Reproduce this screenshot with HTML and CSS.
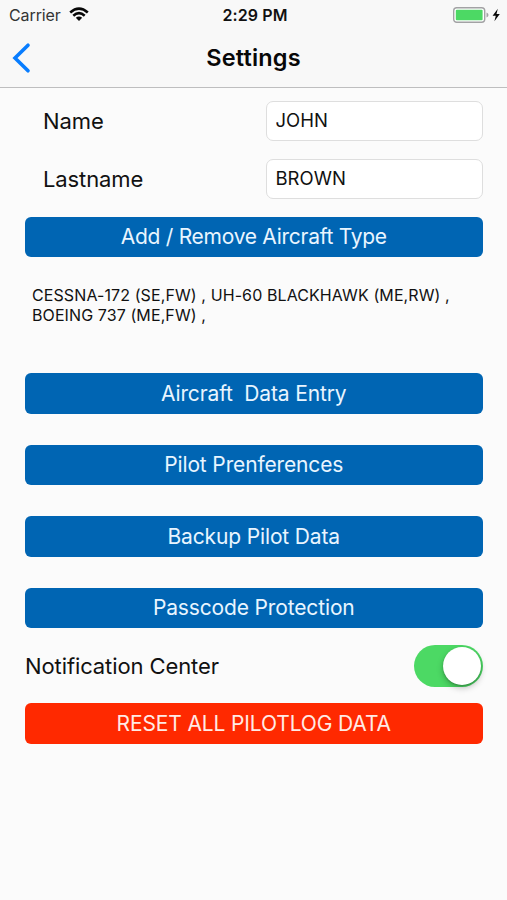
FILE: index.html
```html
<!DOCTYPE html>
<html lang="en">
<head>
<meta charset="utf-8">
<title>Settings</title>
<link rel="stylesheet" href="styles.css">
</head>
<body>
<header class="top">
  <div class="status">
    <div class="status-left"><span class="carrier">Carrier</span>
      <svg class="wifi" width="20" height="15" viewBox="0 0 20 15" fill="none" stroke="#080808" stroke-width="2.6"><path d="M1.2 5.4Q10-2.3 18.8 5.4"/><path d="M4.3 8.7Q10 3.7 15.7 8.7"/><path d="M6.8 10.8Q10 8 13.2 10.8L10 14Z" fill="#080808" stroke="none"/></svg>
    </div>
    <span class="time">2:29 PM</span>
    <div class="status-right">
      <svg width="48" height="18" viewBox="0 0 48 18"><rect x=".7" y="1.7" width="31" height="14.6" rx="3" fill="#fff" stroke="#a2a2a4" stroke-width="1.4"/><rect x="2.8" y="3.8" width="26.8" height="10.4" rx="1" fill="#4cd964"/><path d="M33.5 6.6Q35.5 7.3 35.5 9T33.5 11.4Z" fill="#a2a2a4"/><path d="M44.8 2.8 39.6 9.8H42.8L41.4 15.2 46.8 8H43.5Z" fill="#080808"/></svg>
    </div>
  </div>
  <div class="nav">
    <svg class="back" width="20" height="32" viewBox="0 0 20 32" fill="none" stroke="#087dff" stroke-width="3.6"><path d="M17 3.2 4 16 17 28.8" stroke-linecap="round"/></svg>
    <h1 class="title">Settings</h1>
  </div>
</header>
<main class="content">
  <label class="field"><span class="label name">Name</span><input class="input" type="text" value="JOHN"></label>
  <label class="field"><span class="label lastname">Lastname</span><input class="input" type="text" value="BROWN"></label>
  <button class="button add">Add / Remove Aircraft Type</button>
  <p class="types">CESSNA-172 (SE,FW) , UH-60 BLACKHAWK (ME,RW) ,<br>BOEING 737 (ME,FW) ,</p>
  <div class="actions">
    <button class="button">Aircraft&nbsp; Data Entry</button>
    <button class="button">Pilot Prenferences</button>
    <button class="button">Backup Pilot Data</button>
    <button class="button">Passcode Protection</button>
  </div>
  <div class="notify"><span class="label center">Notification Center</span><span class="switch"><span class="knob"></span></span></div>
  <button class="button reset">RESET ALL PILOTLOG DATA</button>
</main>
</body>
</html>
```
FILE: styles.css
```css
* { box-sizing: border-box; }
body {
  margin: 0;
  height: 900px;
  overflow: hidden;
  background: #fbfbfb;
  color: #111;
  font-family: Inter, "Liberation Sans", sans-serif;
}
.top { height: 88px; background: #f8f8f8; border-bottom: 1.5px solid #bebebf; }
.status { height: 29px; display: grid; grid-template-columns: 1fr auto 1fr; align-items: center; padding: 0 6px 0 9px; }
.status-left { display: flex; align-items: center; gap: 8px; }
.carrier { font-size: 16px; letter-spacing: -.1px; color: #343434; }
.time { font-size: 16px; font-weight: 600; letter-spacing: .1px; }
.status-right { display: flex; justify-content: flex-end; }
.nav { height: 57px; display: grid; grid-template-columns: 40px 1fr 40px; align-items: center; }
.back { margin-left: 11px; }
.title { margin: 0; text-align: center; font-size: 23.5px; font-weight: 600; letter-spacing: .15px; color: #080808; }
.content { padding: 12.5px 24.5px 0 25px; }
.field { height: 40.5px; display: flex; align-items: center; justify-content: space-between; margin-bottom: 17.5px; padding-left: 18px; }
.label { font-size: 22px; letter-spacing: -.1px; }
.input { width: 217px; height: 40.5px; padding: 0 9px 1px; border: 1px solid #dedede; border-radius: 7px; background: #fff; color: #111; font: 18.5px Inter, "Liberation Sans", sans-serif; outline: 0; }
.button { display: block; width: 100%; height: 40.5px; padding: 0; border: 0; border-radius: 6px; background: #0065b3; color: #e9f5ff; font: 21px Inter, "Liberation Sans", sans-serif; letter-spacing: -.14px; }
.add { letter-spacing: -.27px; }
.types { height: 116px; margin: 0; padding: 29px 0 0 7px; font-size: 16px; letter-spacing: .1px; line-height: 19.5px; white-space: nowrap; }
.actions { display: grid; gap: 31px; }
.notify { height: 75px; display: flex; align-items: center; justify-content: space-between; }
.switch { width: 69px; height: 42px; padding: 2px; border-radius: 21px; background: #4cd964; display: flex; justify-content: flex-end; }
.knob { width: 38px; height: 38px; border-radius: 50%; background: #fff; box-shadow: 0 3px 6px rgba(0,0,0,.25), 0 1px 2px rgba(0,0,0,.2); }
.reset { background: #ff2900; color: #ffeae5; }
```
